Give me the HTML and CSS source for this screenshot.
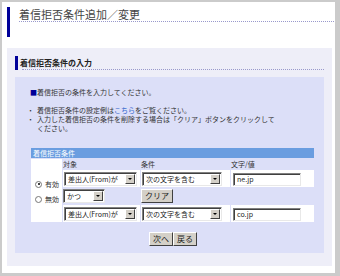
FILE: index.html
```html
<!DOCTYPE html>
<html lang="ja">
<head>
    <meta charset="UTF-8">
    <title>着信拒否条件追加／変更</title>
    <link rel="stylesheet" href="styles.css">
</head>
<body>
    <div class="page">
        <div class="title">
            <h1>着信拒否条件追加／変更</h1>
        </div>

        <div class="panel">
            <h2>着信拒否条件の入力</h2>

            <div class="box">
                <p class="lead"><span class="sq">■</span>着信拒否の条件を入力してください。</p>
                <ul class="notes">
                    <li>着信拒否条件の設定例は<a href="#">こちら</a>をご覧ください。</li>
                    <li>入力した着信拒否の条件を削除する場合は「クリア」ボタンをクリックして<br>ください。</li>
                </ul>

                <table class="cond">
                    <tr><th colspan="4" class="cap">着信拒否条件</th></tr>
                    <tr class="head">
                        <td class="radios" rowspan="4">
                            <label><span class="radio on"></span>有効</label>
                            <label><span class="radio"></span>無効</label>
                        </td>
                        <td>対象</td>
                        <td>条件</td>
                        <td>文字/値</td>
                    </tr>
                    <tr class="row">
                        <td><span class="sel w1">差出人(From)が<i class="arr"></i></span></td>
                        <td><span class="sel w2">次の文字を含む<i class="arr"></i></span></td>
                        <td><span class="inp">ne.jp</span></td>
                    </tr>
                    <tr class="mid">
                        <td><span class="sel w3">かつ<i class="arr"></i></span></td>
                        <td colspan="2"><span class="btn">クリア</span></td>
                    </tr>
                    <tr class="row">
                        <td><span class="sel w1">差出人(From)が<i class="arr"></i></span></td>
                        <td><span class="sel w2">次の文字を含む<i class="arr"></i></span></td>
                        <td><span class="inp">co.jp</span></td>
                    </tr>
                </table>

                <div class="actions">
                    <span class="btn">次へ</span><span class="btn">戻る</span>
                </div>
            </div>
        </div>
    </div>
</body>
</html>
```

FILE: styles.css
```css
body {
    margin: 0;
    padding: 2px 5px 3px 2px;
    background: #cbcbcb;
    font-family: "Noto Sans CJK JP", "DejaVu Sans", sans-serif;
    font-size: 7px;
    color: #333;
}
.page {
    background: #fff;
    height: 271px;
    padding-top: 5px;
    box-sizing: border-box;
}
.title {
    margin-left: 5px;
    border-left: 3px solid #000099;
    height: 30px;
    padding-left: 9px;
    padding-right: 1px;
}
.title h1 {
    margin: 0;
    font-size: 11px;
    font-weight: normal;
    line-height: 14px;
    border-bottom: 1px dotted #9999cc;
    color: #444;
}
.panel {
    margin: 11px 3px 0 5px;
    background: #eeeef8;
    padding: 8px 8px 13px 8px;
}
.panel h2 {
    margin: 0;
    font-size: 8px;
    line-height: 13px;
    font-weight: bold;
    color: #222;
    border-left: 3px solid #000099;
    padding-left: 2px;
}
.panel h2::after {
    content: "";
    display: block;
    margin-left: 2px;
    border-bottom: 1px dotted #9999cc;
}
.box {
    margin-top: 7px;
    background: #dcdff8;
    padding: 11px 8px 7px 15px;
}
.lead {
    margin: 0;
    line-height: 9px;
}
.sq {
    color: #000099;
}
.notes {
    list-style: none;
    margin: 9px 0 0 -3px;
    padding: 0;
    line-height: 9px;
}
.notes li {
    padding-left: 10px;
    text-indent: -10px;
}
.notes li::before {
    content: "・";
    display: inline-block;
    width: 10px;
    text-indent: 0;
}
.notes a {
    color: #3366cc;
    text-decoration: none;
}
.cond {
    margin-top: 14px;
    width: 285px;
    border-collapse: separate;
    border-spacing: 1px;
}
.cond td, .cond th {
    padding: 0;
    font-weight: normal;
    text-align: left;
}
.cap {
    background: #6a9de0;
    color: #fff;
    height: 10px;
    line-height: 10px;
    padding-left: 2px !important;
}
.radios {
    background: #fff;
    width: 31px;
    vertical-align: middle;
    padding-top: 2px !important;
}
.radios label {
    display: flex;
    align-items: center;
    gap: 3px;
    padding-left: 4px;
    height: 15px;
}
.radio {
    width: 5px;
    height: 5px;
    border: 1px solid #777;
    border-radius: 50%;
    background: #fff;
    position: relative;
}
.radio.on::after {
    content: "";
    position: absolute;
    left: 1.5px;
    top: 1.5px;
    width: 2px;
    height: 2px;
    border-radius: 50%;
    background: #000;
}
.head td {
    height: 10px;
    line-height: 10px;
}
.head td:nth-child(2) { width: 77px; }
.head td:nth-child(3) { width: 89px; }
.row td {
    background: #fff;
    height: 16px;
    padding: 1px 0 0 1px;
}
.row td:last-child {
    padding-left: 2px;
}
.mid td {
    height: 16px;
}
.sel {
    display: inline-flex;
    align-items: center;
    justify-content: space-between;
    height: 14px;
    box-sizing: border-box;
    border: 1px solid;
    border-color: #808080 #e8e8e8 #e8e8e8 #808080;
    box-shadow: inset 1px 1px 0 #404040;
    background: #fff;
    padding: 0 1px 0 3px;
    font-size: 7px;
    color: #222;
    vertical-align: middle;
}
.w1 { width: 73px; }
.w2 { width: 80px; }
.w3 { width: 42px; }
.arr {
    width: 10px;
    height: 10px;
    box-sizing: border-box;
    background: #d4d0c8;
    border: 1px solid;
    border-color: #fff #404040 #404040 #fff;
    position: relative;
}
.arr::after {
    content: "";
    position: absolute;
    left: 2px;
    top: 3px;
    border-left: 2px solid transparent;
    border-right: 2px solid transparent;
    border-top: 2px solid #000;
}
.inp {
    display: inline-block;
    width: 68px;
    height: 13px;
    line-height: 11px;
    box-sizing: border-box;
    border: 1px solid;
    border-color: #808080 #e8e8e8 #e8e8e8 #808080;
    box-shadow: inset 1px 1px 0 #404040;
    background: #fff;
    padding-left: 3px;
    color: #222;
    vertical-align: middle;
}
.btn {
    display: inline-block;
    height: 14px;
    line-height: 12px;
    box-sizing: border-box;
    padding: 0 3px;
    background: #d4d0c8;
    border: 1px solid;
    border-color: #fff #404040 #404040 #fff;
    color: #222;
    font-size: 8px;
    vertical-align: middle;
}
.actions {
    display: flex;
    justify-content: center;
    margin-top: 9px;
}
```
